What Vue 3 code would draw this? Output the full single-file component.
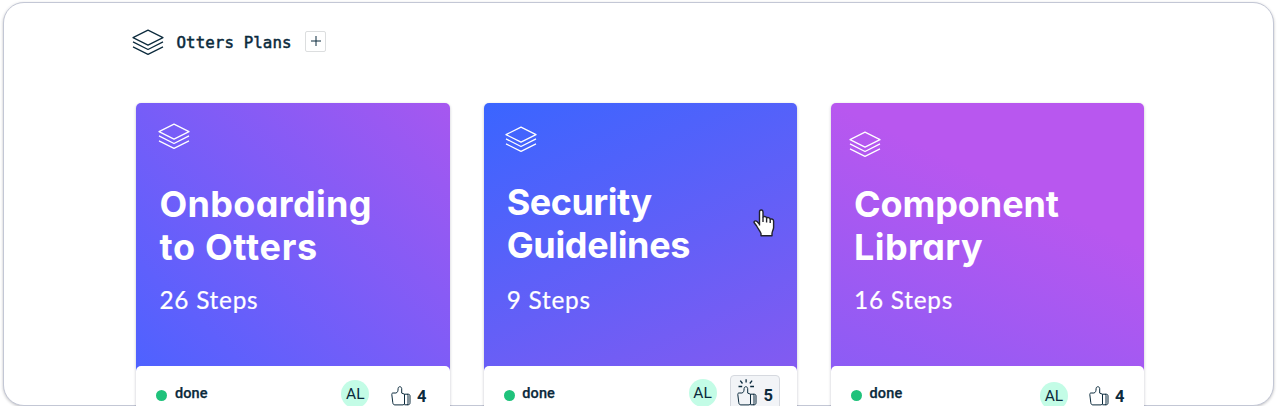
<script setup>
const layers = 'M1 8.6 16 1.1 31 8.6 16 16.1Z M1 12.9 16 20.5 31 12.9 M1 17.9 16 25.4 31 17.9'

const plans = [
  { key: 'onboarding', lines: ['Onboarding', 'to Otters'], steps: '26 Steps', likes: 4, cheering: false },
  { key: 'security', lines: ['Security', 'Guidelines'], steps: '9 Steps', likes: 5, cheering: true },
  { key: 'library', lines: ['Component', 'Library'], steps: '16 Steps', likes: 4, cheering: false },
]
</script>

<template>
  <main class="panel">
    <header class="heading">
      <svg class="layers" viewBox="0 0 32 27"><path :d="layers" /></svg>
      <h1>Otters Plans</h1>
      <button class="add" aria-label="Add plan">
        <svg viewBox="0 0 12 12"><path d="M6 1V11M1 6H11" /></svg>
      </button>
    </header>

    <section class="cards">
      <article v-for="plan in plans" :key="plan.key" class="card" :class="plan.key">
        <div class="hero">
          <div class="symbol">
            <svg class="layers" viewBox="0 0 32 27"><path :d="layers" /></svg>
          </div>
          <h2>
            <span v-for="(line, i) in plan.lines" :key="line" :class="'line' + i">{{ line }}</span>
          </h2>
          <p>{{ plan.steps }}</p>
        </div>
        <footer>
          <i class="dot"></i>
          <span class="status">done</span>
          <span class="avatar">AL</span>
          <span class="likes" :class="{ cheering: plan.cheering }">
            <svg class="thumb" viewBox="0 0 20 27">
              <path
                v-if="plan.cheering"
                class="rays"
                d="M9.1 .3V3.6M3.3 1.6 5.5 4.5M15.1 1.6 12.8 4.5M1.5 7.5H5.2M13.2 7.5H17"
              />
              <path
                d="M13.5 15.2 10.7 14.1V9.6C10.5 7.1 7.2 7.1 7.1 9.6C7.1 12 6.5 13.8 4.8 14H2.1C1.1 14 .7 14.6.8 15.5L1.8 23.7C2 25.2 2.7 25.9 4 25.9H12.1L13.5 25M13.5 15.2V25.4M13.5 15.2H16C16.8 15.2 17 15.9 17 17V24C17 25.2 16.8 25.8 16 25.8H13.5M16 15.2H17.2C18.4 15.2 19 15.9 19 17V23.8C19 25.2 18.2 25.8 17 25.8H16"
              />
            </svg>
            <b>{{ plan.likes }}</b>
          </span>
        </footer>
        <svg v-if="plan.cheering" class="pointer" viewBox="0 0 22 28">
          <path
            d="M6.5 16.5V3C6.5 .4 10 .4 10 3V8.3C10.5 7 13.4 7.2 13.6 9.2C14.3 8 17 8.4 17.2 10.3C18.4 9.4 20.6 10.3 20.6 12.3V18.5C20.6 20.5 19 22.5 19 24.5V26.8H8V24.5C7 22 4.8 19.5 3.5 16.8L1.2 13.8C.4 12.2 2.6 11.2 4 12.6L6.5 15.2"
          />
          <path d="M10 8.3V13M13.6 9.2V13.4M17.2 10.3V14" />
        </svg>
      </article>
    </section>
  </main>
</template>

<style>
body {
  background: #fff;
}
</style>

<style scoped>
* {
  box-sizing: border-box;
}
.panel {
  width: 1271px;
  height: 404px;
  margin: 2px 0 0 3px;
  border: 1px solid #c3c7d5;
  border-radius: 21px;
  background: #fff;
  box-shadow: 0 1px 3px rgba(30, 30, 40, 0.28);
  color: #0b2a3c;
  display: flex;
  flex-direction: column;
}
svg {
  fill: none;
  stroke: currentColor;
  display: block;
}
.heading {
  display: flex;
  align-items: center;
  height: 24px;
  margin: 28px 0 0 128px;
}
.layers {
  width: 32px;
  height: 27px;
  stroke-width: 1.2;
  stroke-linejoin: round;
  flex: none;
}
.heading .layers {
  margin-bottom: 1px;
}
h1 {
  margin: 0 0 0 12.5px;
  width: 116.5px;
  font: 400 15.8px/24px "DejaVu Sans Mono", monospace;
  letter-spacing: 0.08px;
  -webkit-text-stroke: 0.5px currentColor;
  white-space: nowrap;
}
.add {
  width: 21px;
  height: 21px;
  margin: 0 0 3px 12px;
  padding: 0;
  border: 1px solid #dcdedf;
  border-radius: 2px;
  background: #fff;
  color: #0b2a3c;
  display: grid;
  place-items: center;
}
.add svg {
  width: 12px;
  height: 12px;
  margin-bottom: 1px;
}
.cards {
  display: flex;
  gap: 34px;
  margin: 46px 0 -1px 128px;
  padding: 2.3px 4.3px 0;
  height: 306px;
  flex: none;
  width: 1020px;
  overflow: hidden;
}
.card {
  position: relative;
  width: 313.3px;
  height: 340px;
  flex: none;
  border-radius: 5px;
  box-shadow: 0 1px 3px rgba(20, 20, 50, 0.25);
}
.hero {
  height: 269.7px;
  padding-left: 23.1px;
  border-radius: 5px 5px 0 0;
  color: #fff;
}
.onboarding .hero {
  background: linear-gradient(45deg, #4d62ff 0%, #aa57ef 104%);
}
.security .hero {
  background: linear-gradient(155deg, #3a65ff 0%, #875af0 104%);
}
.library .hero {
  background: linear-gradient(25deg, #8b5cf5 0%, #b857ef 65%);
}
.symbol {
  height: 79.7px;
  padding-top: 20px;
}
.symbol .layers {
  margin-left: -1.4px;
  stroke-width: 1.25;
}
.security .symbol {
  height: 77.7px;
  padding-top: 23px;
}
.library .symbol {
  padding-top: 28px;
}
.library .layers {
  margin-left: -5px;
}
h2 {
  margin: 0;
  font: 700 36px/43px Inter, sans-serif;
  font-feature-settings: "cv11" 1;
}
h2 span {
  display: block;
  white-space: nowrap;
}
.onboarding .line0 {
  letter-spacing: 0.35px;
}
.onboarding .line1 {
  letter-spacing: 0.7px;
}
.security .line0 {
  letter-spacing: -0.5px;
}
.security .line1 {
  letter-spacing: -0.35px;
}
.library .line0 {
  letter-spacing: -0.1px;
}
.library .line1 {
  letter-spacing: 0.4px;
}
.hero p {
  margin: 14px 0 0;
  font: 400 24.4px/34px Lato, sans-serif;
  letter-spacing: 0.75px;
  -webkit-text-stroke: 0.2px currentColor;
}
.security p {
  margin-top: 16px;
}
footer {
  position: relative;
  height: 77px;
  margin-top: -7px;
  padding: 0 0 0 20px;
  border-radius: 5px 5px 0 0;
  background: #fff;
  display: flex;
  align-items: flex-start;
}
footer > * {
  flex: none;
}
.dot {
  width: 11px;
  height: 11px;
  margin-top: 24px;
  border-radius: 50%;
  background: #1fc27b;
}
.status {
  margin: 18.2px 0 0 7.6px;
  width: 34.4px;
  font: 500 14.5px/20px Roboto, sans-serif;
  letter-spacing: 0.15px;
  -webkit-text-stroke: 0.25px currentColor;
}
.avatar {
  width: 28px;
  height: 28px;
  margin: 14px 0 0 132px;
  border-radius: 50%;
  background: #c3fce6;
  font: 400 15.5px/29px Roboto, sans-serif;
  text-align: center;
}
.likes {
  display: flex;
  margin: 13px 0 0 21.5px;
}
.thumb {
  width: 20px;
  height: 27px;
  stroke-width: 1;
  stroke-linejoin: round;
}
.rays {
  stroke-width: 1.3;
}
.likes b {
  margin: 8px 0 0 6.3px;
  font: 700 16.5px/20px Roboto, sans-serif;
}
.security .avatar {
  margin: 13px 0 0 132px;
}
.security .likes {
  width: 50px;
  height: 60px;
  margin: 9px 0 0 13.6px;
  padding: 4px 0 0 6px;
  border: 1px solid #d6d9df;
  border-radius: 4px;
  background: #f2f4f7;
}
.cheering .thumb {
  margin-top: -1px;
}
.cheering b {
  margin-top: 6px;
}
.library .avatar {
  margin: 16px 0 0 136px;
}
.library .likes {
  margin-left: 20.8px;
}
.pointer {
  position: absolute;
  left: 269.5px;
  top: 105.5px;
  width: 22px;
  height: 28px;
  fill: #fff;
  stroke: #22222c;
  stroke-width: 1.4;
  stroke-linejoin: round;
}
</style>
